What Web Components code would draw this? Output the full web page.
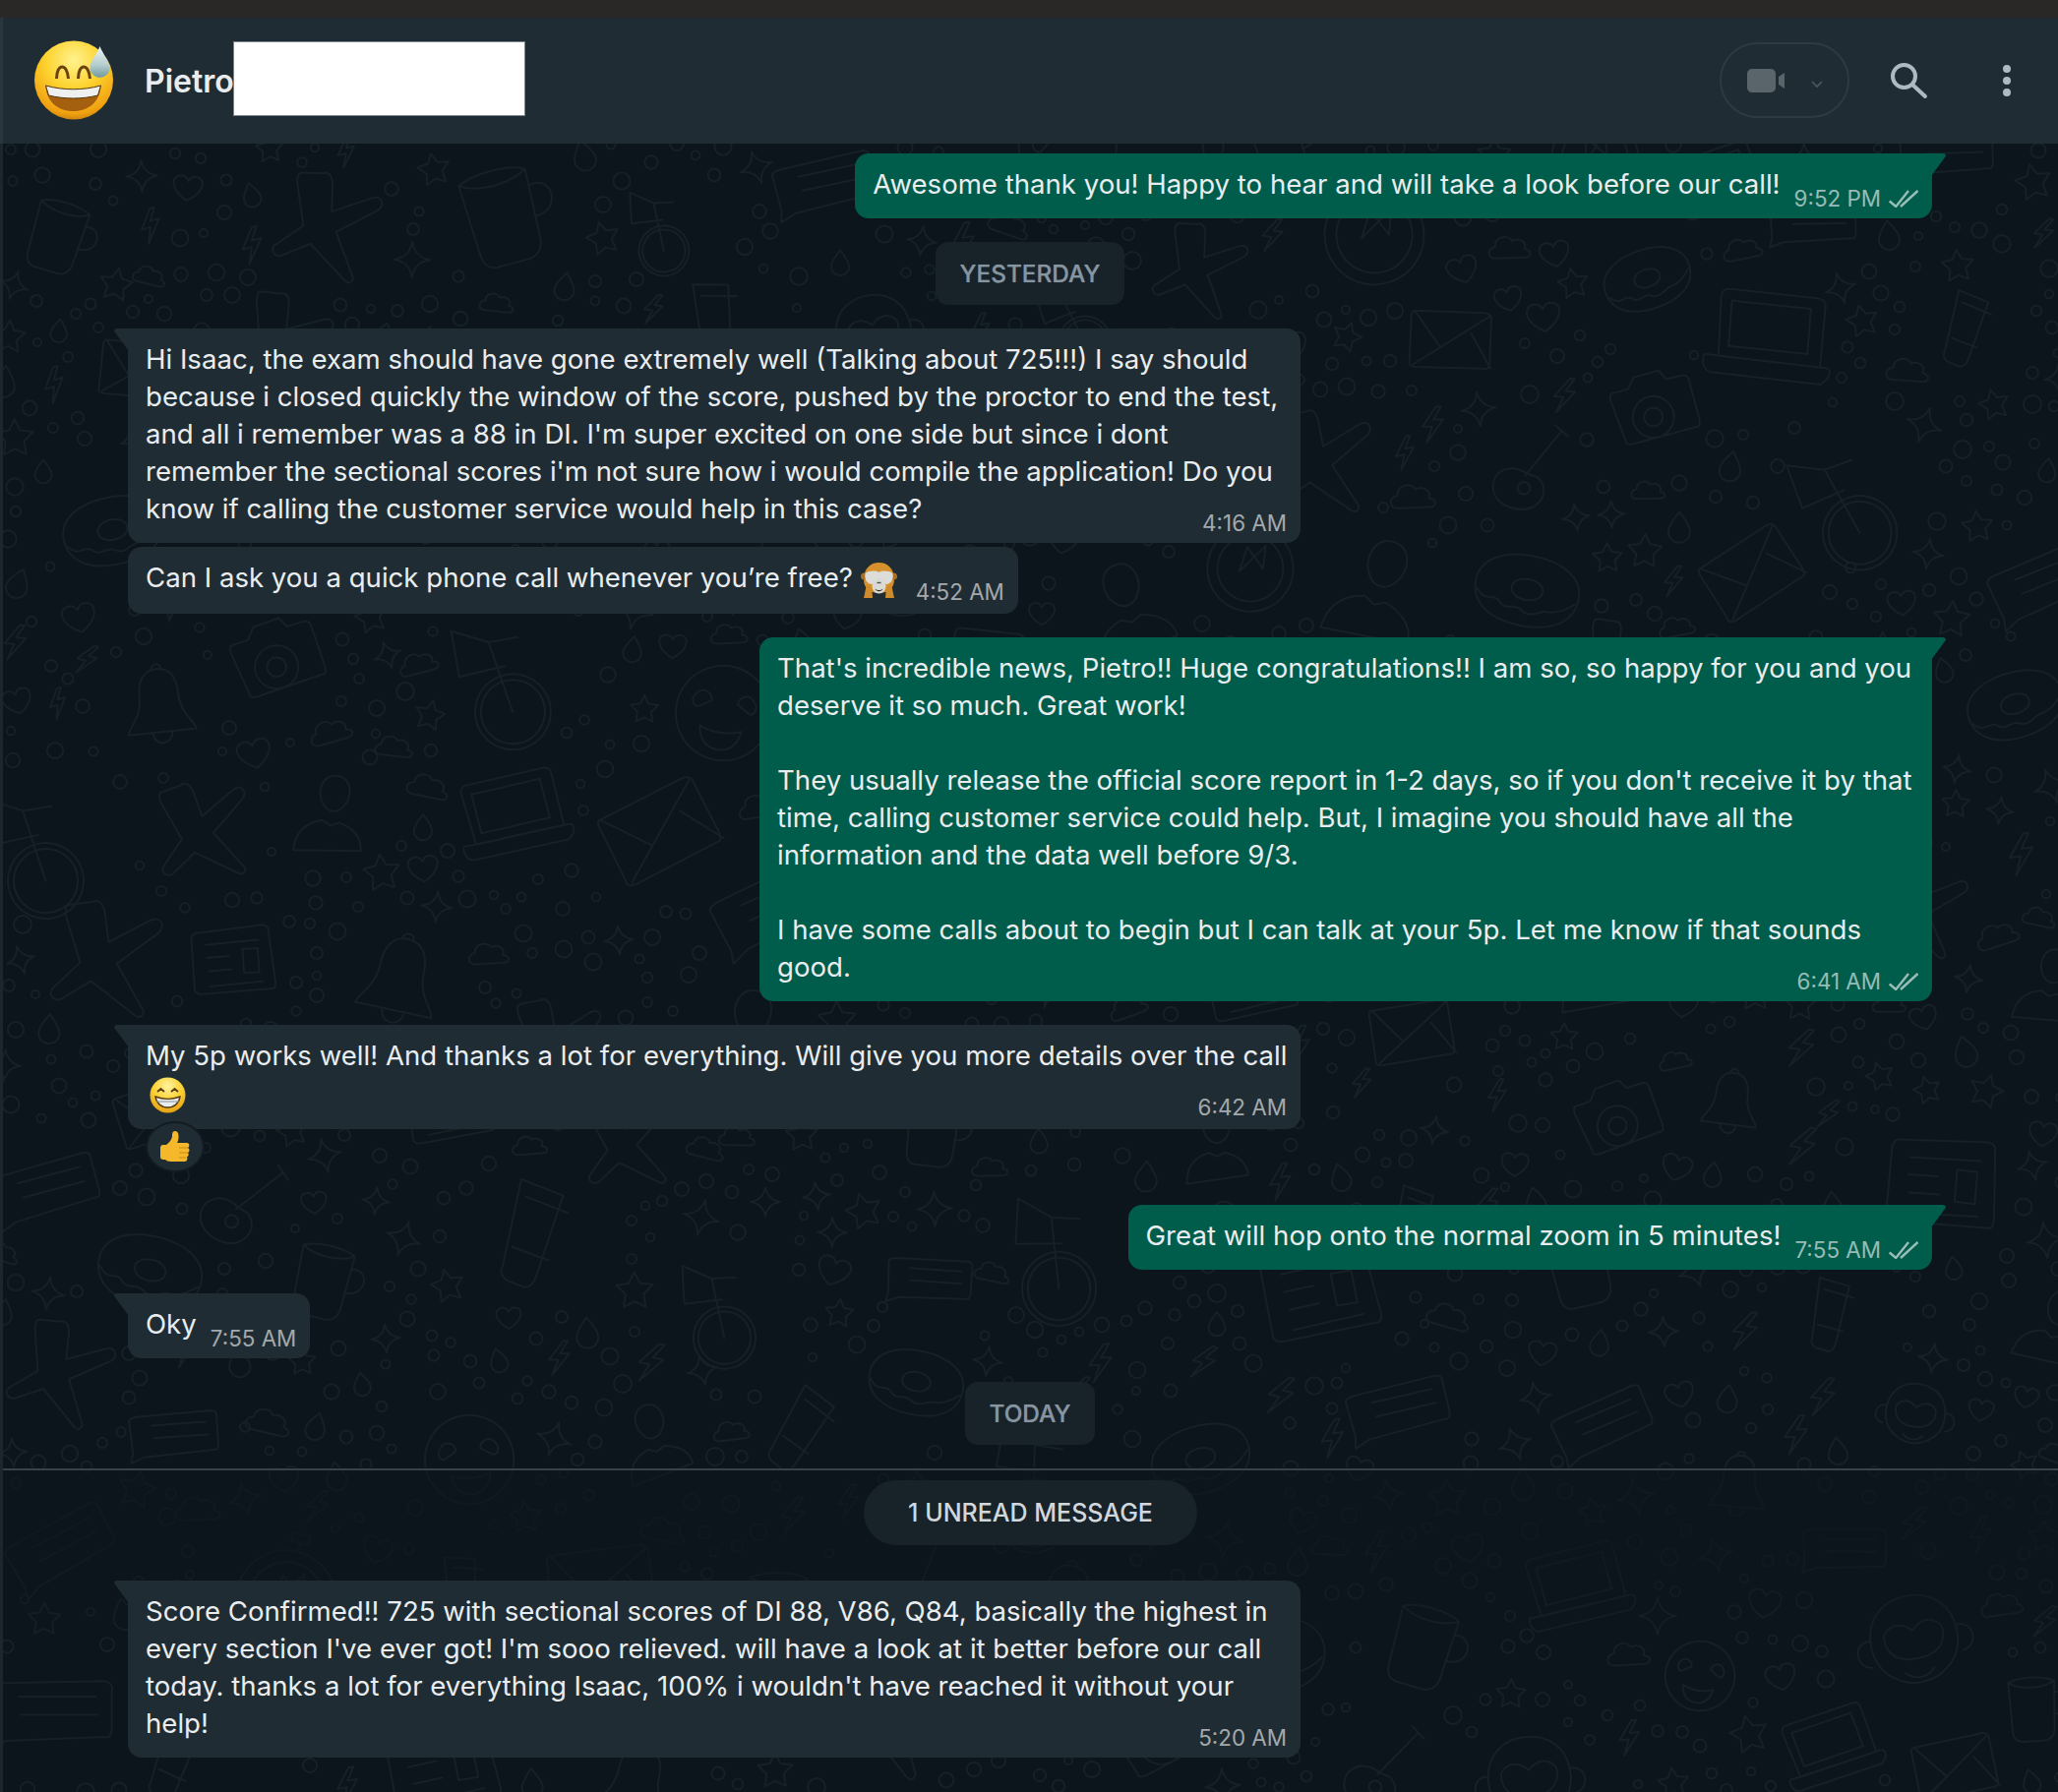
<!DOCTYPE html>
<html>
<head>
<meta charset="utf-8">
<title>Chat</title>
<style>
  html, body { margin: 0; height: 100%; background: #0b141a; overflow: hidden; }
  body { font-family: Inter, "Liberation Sans", sans-serif; color: #e9edef; }
</style>
</head>
<body>
<wa-app>
  <wa-header slot="header" name="Pietro"></wa-header>
  <wa-bubble side="out" tail inline time="9:52 PM" style="margin-top:10px">Awesome thank you! Happy to hear and will take a look before our call!</wa-bubble>
  <wa-pill style="margin-top:24px">YESTERDAY</wa-pill>
  <wa-bubble side="in" tail wide time="4:16 AM" style="margin-top:24px">Hi Isaac, the exam should have gone extremely well (Talking about 725!!!) I say should<br>because i closed quickly the window of the score, pushed by the proctor to end the test,<br>and all i remember was a 88 in DI. I'm super excited on one side but since i dont<br>remember the sectional scores i'm not sure how i would compile the application! Do you<br>know if calling the customer service would help in this case?</wa-bubble>
  <wa-bubble side="in" inline time="4:52 AM" style="margin-top:4px;padding-bottom:18px">Can I ask you a quick phone call whenever you’re free? <wa-emoji name="monkey" style="margin-right:5px"></wa-emoji></wa-bubble>
  <wa-bubble side="out" tail wide time="6:41 AM" style="margin-top:24px">That's incredible news, Pietro!! Huge congratulations!! I am so, so happy for you and you<br>deserve it so much. Great work!<br><br>They usually release the official score report in 1-2 days, so if you don't receive it by that<br>time, calling customer service could help. But, I imagine you should have all the<br>information and the data well before 9/3.<br><br>I have some calls about to begin but I can talk at your 5p. Let me know if that sounds<br>good.</wa-bubble>
  <wa-bubble side="in" tail wide time="6:42 AM" style="margin-top:24px;padding-bottom:18px">My 5p works well! And thanks a lot for everything. Will give you more details over the call<br><wa-emoji name="grin" style="margin-left:4px"></wa-emoji><wa-reaction slot="reaction"></wa-reaction></wa-bubble>
  <wa-bubble side="out" tail inline time="7:55 AM" style="margin-top:77px">Great will hop onto the normal zoom in 5 minutes!</wa-bubble>
  <wa-bubble side="in" tail inline time="7:55 AM" style="margin-top:24px">Oky</wa-bubble>
  <wa-pill style="margin-top:24px">TODAY</wa-pill>
  <wa-unread style="margin-top:24px">1 UNREAD MESSAGE</wa-unread>
  <wa-bubble side="in" tail wide time="5:20 AM" style="margin-top:36px">Score Confirmed!! 725 with sectional scores of DI 88, V86, Q84, basically the highest in<br>every section I've ever got! I'm sooo relieved. will have a look at it better before our call<br>today. thanks a lot for everything Isaac, 100% i wouldn't have reached it without your<br>help!</wa-bubble>
</wa-app>

<script>
// the app frame: top strip, header, then the scrolling chat column
class WaApp extends HTMLElement {
  constructor() {
    super();
    this.attachShadow({mode: 'open'});
    this.shadowRoot.innerHTML = `
      <style>
        :host { display: flex; flex-direction: column; height: 1822px; }
        .strip { height: 18px; background: #2a2826; flex: none; }
        .chat {
          position: relative; flex: 1; overflow: hidden;
          border-left: 3px solid #1c272d; background: #0b151b;
        }
        .col {
          position: relative; display: flex; flex-direction: column;
          padding: 0 128px 0 127px;
        }
      </style>
      <div class="strip"></div>
      <slot name="header"></slot>
      <div class="chat">
        <wa-doodle></wa-doodle>
        <div class="col"><slot></slot></div>
      </div>`;
  }
}

class WaHeader extends HTMLElement {
  constructor() {
    super();
    this.attachShadow({mode: 'open'});
    this.shadowRoot.innerHTML = `
      <style>
        :host {
          display: flex; align-items: center; flex: none; height: 128px;
          background: #202c33; border-left: 3px solid #2a363d; box-sizing: border-box;
          padding-left: 31px;
        }
        .avatar { width: 82px; height: 81px; flex: none; margin-top: -1px; }
        .name {
          margin-left: 31px; font-size: 32px; font-weight: 600; color: #e9edef;
          width: 89px; white-space: nowrap;
        }
        .redact {
          width: 297px; height: 76px; background: #fff; border: 1px solid #7b8790;
          box-sizing: border-box; margin-left: 1px; margin-top: -5px;
        }
        .call {
          margin-left: auto; width: 132px; height: 77px; box-sizing: border-box;
          border: 2px solid #2e3a41; border-radius: 39px; display: flex; align-items: center;
          padding-left: 26px; gap: 20px; margin-top: -1px;
        }
        .search { margin-left: 40px; width: 40px; height: 40px; display: block; }
        .dots { margin-left: 75px; margin-right: 47px; width: 10px; height: 36px; display: block; }
      </style>
      <svg class="avatar" viewBox="0 0 81 81">
        <defs>
          <radialGradient id="av" cx="50%" cy="25%" r="80%">
            <stop offset="0" stop-color="#fff38e"/><stop offset=".45" stop-color="#fdd22e"/><stop offset=".85" stop-color="#f0a010"/><stop offset="1" stop-color="#b5740c"/>
          </radialGradient>
          <linearGradient id="dr" x1="0" y1="0" x2="0" y2="1"><stop offset="0" stop-color="#eef5f5"/><stop offset=".6" stop-color="#b4cccd"/><stop offset="1" stop-color="#6f9a9c"/></linearGradient>
        </defs>
        <circle cx="40.500" cy="40.500" r="40" fill="url(#av)"/>
        <path d="M23 39c0-16 11-16 12 0M45 39c0-16 11-16 12 0" fill="none" stroke="#6b4310" stroke-width="3"/>
        <path d="M12 47c18 5 38 5 56 0-1 15-12 25-28 25S13 62 12 47z" fill="#a5600f"/>
        <path d="M12 46c18 5 38 5 56 0l-3 10c-16 4-34 4-50 0z" fill="#eef0f0" stroke="#54350c" stroke-width="1"/>
        <path d="M67 6c3 8 10 15 10 22a10 10 0 0 1-20 0c0-7 7-14 10-22z" fill="url(#dr)"/>
      </svg>
      <span class="name"></span>
      <div class="redact"></div>
      <div class="call">
        <svg width="40" height="26" viewBox="0 0 40 26"><rect x="0" y="1" width="29" height="24" rx="5" fill="#59646b"/><path d="M32 9l6-4v16l-6-4z" fill="#59646b"/></svg>
        <svg width="14" height="10" viewBox="0 0 14 10" style="margin-left:4px;margin-top:8px"><path d="M2 2l5 5 5-5" fill="none" stroke="#4d585f" stroke-width="1.600"/></svg>
      </div>
      <svg class="search" viewBox="0 0 40 40"><circle cx="15.500" cy="15.500" r="11.500" fill="none" stroke="#aebac1" stroke-width="4"/><path d="M24 24l13 12" stroke="#aebac1" stroke-width="4" stroke-linecap="round"/></svg>
      <svg class="dots" viewBox="0 0 10 36" fill="#aebac1"><circle cx="5" cy="6" r="4"/><circle cx="5" cy="18" r="4"/><circle cx="5" cy="30" r="4"/></svg>`;
    this.shadowRoot.querySelector('.name').textContent = this.getAttribute('name');
  }
}

// Message bubble. `inline` puts the time beside the text, otherwise it sits under the last line.
class WaBubble extends HTMLElement {
  constructor() {
    super();
    this.attachShadow({mode: 'open'});
    const out = this.getAttribute('side') === 'out';
    this.shadowRoot.innerHTML = `
      <style>
        :host {
          display: block; position: relative; flex: none; box-sizing: border-box;
          align-self: ${out ? 'flex-end' : 'flex-start'};
          background: ${out ? '#005c4b' : '#202c33'};
          border-radius: 14px; padding: 12px 14px 16px 18px;
          font-size: 27.6px; line-height: 38px; color: #e9edef; white-space: nowrap;
        }
        :host([wide]) { width: 1192px; }
        :host([tail]) { ${out ? 'border-top-right-radius: 0' : 'border-top-left-radius: 0'}; }
        .tail {
          position: absolute; top: 0; width: 15px; height: 23px;
          ${out ? 'right: -14px' : 'left: -14px'};
          background: inherit; border-top-${out ? 'right' : 'left'}-radius: 3px;
          clip-path: polygon(${out ? '0 0, 100% 0, 100% 12%, 0 100%' : '0 0, 100% 0, 100% 100%, 0 12%'});
        }
        .wrap { display: block; }
        :host([inline]) .wrap { display: flex; align-items: flex-start; gap: 14px; }
        .meta {
          display: flex; justify-content: flex-end; align-items: center; gap: 8px;
          font-size: 22.4px; line-height: 20px; height: 20px; color: rgba(255,255,255,.6);
          margin-top: -14px; margin-bottom: -6px;
        }
        :host([inline]) .meta { margin-top: 24px; }
      </style>
      <div class="wrap">
        <div class="text"><slot></slot></div>
        <div class="meta"><span class="t"></span>${out ? `<svg width="30" height="18" viewBox="0 0 30 18"><path d="M.7 11.500l6.500 5.500L20 1M12 17L29.500 1" fill="none" stroke="rgba(255,255,255,.6)" stroke-width="2.400"/></svg>` : ''}</div>
      </div>
      <slot name="reaction"></slot>`;
    this.shadowRoot.querySelector('.t').textContent = this.getAttribute('time');
    if (this.hasAttribute('tail')) {
      const t = document.createElement('span');
      t.className = 'tail';
      this.shadowRoot.appendChild(t);
    }
  }
}

class WaPill extends HTMLElement {
  constructor() {
    super();
    this.attachShadow({mode: 'open'});
    this.shadowRoot.innerHTML = `
      <style>
        :host {
          display: block; align-self: center; flex: none; height: 64px; padding: 0 24px;
          box-sizing: border-box; background: #182229; border-radius: 13px;
          font-size: 24.4px; font-weight: 500; line-height: 64px; color: #8696a0;
          text-shadow: 0 0 1px rgba(134,150,160,.6);
        }
      </style><slot></slot>`;
  }
}

// divider line with the rounded "unread" label under it
class WaUnread extends HTMLElement {
  constructor() {
    super();
    this.attachShadow({mode: 'open'});
    this.shadowRoot.innerHTML = `
      <style>
        :host { display: block; flex: none; margin: 0 -128px 0 -127px; }
        .line { height: 2px; background: #384249; }
        .row { display: flex; justify-content: center; padding-top: 10px; }
        .label {
          height: 66px; line-height: 66px; padding: 0 45px; border-radius: 33px;
          background: #182229; color: #d1d7db; font-size: 25px; font-weight: 500;
        }
      </style>
      <div class="line"></div>
      <div class="row"><div class="label"><slot></slot></div></div>`;
  }
}

class WaReaction extends HTMLElement {
  constructor() {
    super();
    this.attachShadow({mode: 'open'});
    this.shadowRoot.innerHTML = `
      <style>
        :host {
          position: absolute; left: 18px; bottom: -44px; width: 60px; height: 52px;
          box-sizing: border-box; background: #202c33; border: 2px solid #111b21; border-radius: 50%;
          display: flex; align-items: center; justify-content: center;
        }
      </style>
      <wa-emoji name="thumb"></wa-emoji>`;
  }
}

const EMOJI = {
  grin: {w: 37, h: 37, svg: `
    <defs><radialGradient id="g1" cx="50%" cy="25%" r="80%"><stop offset="0" stop-color="#fff3a0"/><stop offset=".5" stop-color="#fbd233"/><stop offset="1" stop-color="#e09a12"/></radialGradient></defs>
    <circle cx="18.500" cy="18.500" r="18" fill="url(#g1)"/>
    <path d="M8 15l3.500-3 3.500 3M22 15l3.500-3 3.500 3" fill="none" stroke="#5e3d10" stroke-width="2"/>
    <path d="M6 20c8 3 17 3 25 0-1 7-6 11-12.500 11S7 27 6 20z" fill="#e8edf0" stroke="#57380d" stroke-width="1.400"/>
    <path d="M7 25h23" stroke="#8a9196" stroke-width="1"/>`},
  monkey: {w: 37, h: 37, svg: `
    <path d="M3 18C3 7 10 1 18.500 1S34 7 34 18c0 9-6 14-15.500 14S3 27 3 18z" fill="#d6912c"/>
    <circle cx="3.500" cy="15" r="3.500" fill="#a96f24"/><circle cx="33.500" cy="15" r="3.500" fill="#a96f24"/>
    <path d="M3 37l3-14 5 3 1 11zM34 37l-3-14-5 3-1 11z" fill="#cf8a2a"/>
    <path d="M18.500 11c-3-2-10-2-14 1-1 5 1 10 6 11 4 0 7-3 8-6 1 3 4 6 8 6 5-1 7-6 6-11-4-3-11-3-14-1z" fill="#dcdcd8"/>
    <ellipse cx="18.500" cy="25" rx="7" ry="7.500" fill="#d9d9d5"/>
    <path d="M14.500 27.500c2 2 6 2 8 0-1 3.500-7 3.500-8 0z" fill="#2d2620"/>
    <path d="M16.500 21.500h4" stroke="#555" stroke-width="1.400"/>`},
  thumb: {w: 32, h: 35, svg: `
    <path d="M1 18c0-2 1-3 3-3h3c3-2 5-5 6-8 0-3 0-6 3-6 4 0 4 6 3 10l-1 2h10c3 0 3 4 1 5 2 1 2 4 0 5 1 1 1 4-1 4 1 2 0 5-2 5H12c-3 0-5-1-6-2H4c-2 0-3-1-3-3z" fill="#f5b82a"/>
    <path d="M20 18h9M20 23h9M20 28h7" stroke="#c98a16" stroke-width="1.200"/>`}
};

class WaEmoji extends HTMLElement {
  constructor() {
    super();
    this.attachShadow({mode: 'open'});
    const e = EMOJI[this.getAttribute('name')];
    this.shadowRoot.innerHTML = `
      <style>:host { display: inline-block; vertical-align: middle; line-height: 0; margin-top: -4px; margin-bottom: -4px; } svg { display: block; }</style>
      <svg width="${e.w}" height="${e.h}" viewBox="0 0 ${e.w} ${e.h}">${e.svg}</svg>`;
  }
}

// background doodles: big drawings first, then small shapes and bubbles in the gaps
const BIG = [
  // newspaper
  'M-18-12l30-7c2 0 3 1 3 2l6 24c0 2 0 3-2 3l-32 6c-2 0-3-1-3-2l-4-23c0-2 1-3 2-3zM-13-7l24-5M-12-1l10-2M-10 5l10-2M4-7l7-1 2 11-7 1zM-9 12l24-5',
  // person
  'M0-20c5 0 7 4 7 8s-3 9-7 9-7-5-7-9 2-8 7-8zM-16 18c0-12 8-15 12-16l4 2 4-2c4 1 12 4 12 12z',
  // bike wheel and frame
  'M-6 2a13 13 0 1 0 .1 0zM-6 4a11 11 0 1 0 .1 0zM-6 15L-10-10h10M-10-10L-22-16M-22-16v16l16-1',
  // face with heart eyes
  'M0-18a18 18 0 1 0 .1 0zM-11-6c2-3 6-1 6 2l-5 3c-2 0-3-3-1-5zM11-6c-2-3-6-1-6 2l5 3c2 0 3-3 1-5zM-8 6c5 2 11 2 16 0-1 6-4 8-8 8s-7-2-8-8z',
  // camera
  'M-16-9l6-1 3-5 11-2 3 4 7-1c2 0 3 1 3 3l3 17c0 2 0 3-2 3l-28 5c-2 0-3 0-3-2l-5-18c0-2 0-3 2-3zM0-6a9 9 0 1 0 .1 0zM0-1a4 4 0 1 0 .1 0z',
  // mug
  'M-14-14c6-3 18-3 24 0l-1 24c0 5-3 7-6 7h-11c-3 0-5-2-5-7zM-14-14c6 4 18 4 24 0M10-8c9-2 9 12-1 11',
  // guitar
  'M-2 4c-8-6-17-2-17 6 0 9 13 14 20 10 6-4 6-10 2-14zM-4 8a3 3 0 1 0 .1 0zM-3 5L16-16M13-19l6 6',
  // envelope
  'M-20-9l32-8c2 0 3 1 3 2l5 20c0 2 0 3-2 3l-31 8c-2 0-3 0-3-2l-5-21c0-1 0-2 1-2zM-20-9l16 13 18-20M-14 15L-4 4M21 7L8-6',
  // chat bubble with lines
  'M-22-5l36-9c2 0 3 1 3 3l3 13c0 2 0 3-2 3l-33 9-6 4 0-5-4-14c-1-2 0-3 3-4zM-14-2l26-6M-12 4l26-6',
  // compass
  'M0-15a17 17 0 1 0 .1 0zM0-11a13 13 0 1 0 .1 0zM0-15v-3M-3-21h6v3h-6zM4-8l-8 12 1-10 8 7z',
  // donut
  'M0-14c12 0 20 5 20 13 0 9-8 14-20 14S-20 8-20-1c0-8 8-13 20-13zM0-5c4 0 6 2 6 4s-2 4-6 4-6-2-6-4 2-4 6-4zM-19 2c4 5 6 1 9 3 3 4 6 0 9 2 4 3 7-1 10-1 4 0 7-2 10-5',
  // bell
  'M0-17c6 0 8 5 8 11 0 8 5 11 6 15h-28c1-4 6-7 6-15 0-6 2-11 8-11zM-4 9c0 6 8 6 8 0M-2-17a2 2 0 1 1 4 0',
  // monkey face
  'M0-19c9 0 15 6 15 15 0 6-3 10-6 12-5 4-13 4-18 0-3-2-6-6-6-12 0-9 6-15 15-15zM-15-6c-6-1-7 8-1 9M15-6c6-1 7 8 1 9M-10-7c3-4 7-3 10 0 3-3 7-4 10 0 1 5-2 8-5 9-2 1-8 1-10 0-3-1-6-4-5-9zM-5 7c3 3 7 3 10 0',
  // plane
  'M-3-22c3-1 4 2 4 5v10l16-6c4-1 5 3 2 5L3 1l7 17c1 2-1 4-3 2L-7 6l-11 5c-3 1-5-2-3-4l11-8-3-17c0-2 0-4 2-4z',
  // laptop
  'M-17 9l-2-21c0-2 1-3 3-3l31-1c2 0 3 1 3 3l1 21zM-14 5l-1-16 28-1 1 16zM-22 9l43-1c2 0 2 2 1 4l-2 2-39 1c-2 0-4-3-3-6z',
  // tube
  'M-9-19l15 5-8 29c-1 3-2 4-4 4l-6-2c-2-1-3-3-2-5zM-7-13l15 5M-11 5l13 4'
];
const SMALL = [
  'M0-10l3 6 7 1-5 5 1 7-6-3-6 3 1-7-5-5 7-1z',
  'M0-10c1 6 4 9 10 10-6 1-9 4-10 10-1-6-4-9-10-10 6-1 9-4 10-10z',
  'M4-11l-9 12h6l-4 10 11-14h-6l5-8z',
  'M0-9c4 5 6 8 6 11a6 6 0 0 1-12 0c0-3 2-6 6-11z',
  'M0 9c-11-6-11-15-4-15 2 0 3 1 4 3 1-2 2-3 4-3 7 0 7 9-4 15z',
  'M-11 7c-5 0-5-6 0-7 0-6 8-7 10-3 4-2 9 1 7 5 5 1 4 5 0 5z'
];

class WaDoodle extends HTMLElement {
  constructor() {
    super();
    this.attachShadow({mode: 'open'});
    let seed = 48271;
    const rnd = () => (seed = (seed * 16807) % 2147483647) / 2147483647;
    const W = 2092, H = 1676;
    const placed = [];
    const free = (x, y, r) => placed.every(p => (p.x - x) ** 2 + (p.y - y) ** 2 > (p.r + r) ** 2);
    let g = '';
    const scatter = (tries, radius, draw) => {
      for (let i = 0; i < tries; i++) {
        const x = rnd() * W, y = rnd() * H, r = radius();
        if (!free(x, y, r)) continue;
        placed.push({x, y, r});
        g += draw(x, y, r);
      }
    };
    const shape = (d, x, y, s) => `<path d="${d}" vector-effect="non-scaling-stroke" transform="translate(${x.toFixed(0)} ${y.toFixed(0)}) rotate(${(rnd() * 40 - 20).toFixed(0)}) scale(${s.toFixed(2)})"/>`;
    scatter(700, () => 46 + rnd() * 26, (x, y, r) => shape(BIG[Math.floor(rnd() * BIG.length)], x, y, r / 24));
    scatter(1800, () => 15 + rnd() * 6, (x, y, r) => shape(SMALL[Math.floor(rnd() * SMALL.length)], x, y, r / 11));
    scatter(9000, () => 8 + rnd() * 5, (x, y, r) => `<circle cx="${x.toFixed(0)}" cy="${y.toFixed(0)}" r="${(r - 4).toFixed(1)}"/>`);
    const band = 1346;
    this.shadowRoot.innerHTML = `
      <style>
        :host { position: absolute; inset: 0; display: block; }
        svg { display: block; }
      </style>
      <svg width="${W}" height="${H}" fill="none" stroke="#162127" stroke-width="2" stroke-linejoin="round" stroke-linecap="round">
        <defs><linearGradient id="fade" x1="0" y1="0" x2="0" y2="1">
          <stop offset="0" stop-color="#0b151b" stop-opacity=".6"/><stop offset=".4" stop-color="#0b151b" stop-opacity=".7"/><stop offset="1" stop-color="#0b151b" stop-opacity="0"/>
        </linearGradient></defs>
        ${g}
        <rect x="0" y="${band}" width="${W}" height="190" fill="url(#fade)" stroke="none"/>
      </svg>`;
  }
}

customElements.define('wa-emoji', WaEmoji);
customElements.define('wa-reaction', WaReaction);
customElements.define('wa-doodle', WaDoodle);
customElements.define('wa-header', WaHeader);
customElements.define('wa-bubble', WaBubble);
customElements.define('wa-pill', WaPill);
customElements.define('wa-unread', WaUnread);
customElements.define('wa-app', WaApp);
</script>
</body>
</html>
